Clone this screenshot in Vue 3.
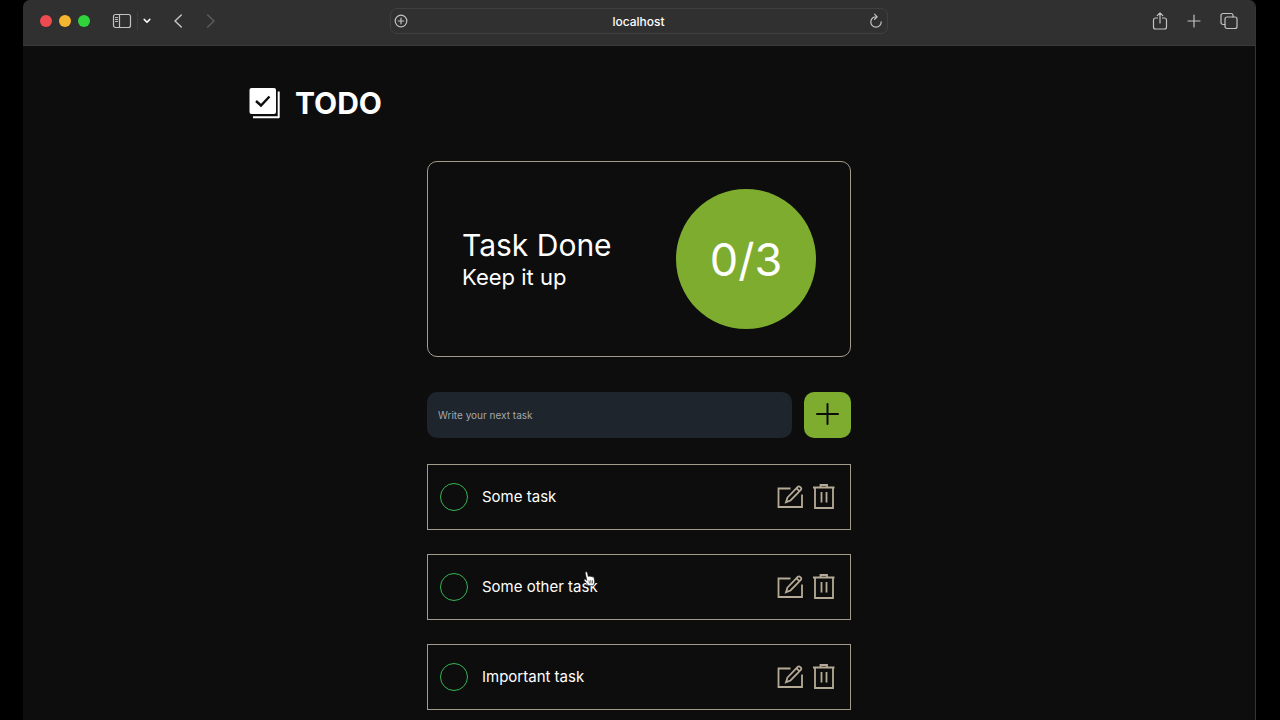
<template>
  <div class="desktop">
    <div class="window">
      <header class="toolbar">
        <div class="toolbar-left">
          <div class="lights">
            <button class="light red" aria-label="Close"></button>
            <button class="light yellow" aria-label="Minimize"></button>
            <button class="light green" aria-label="Zoom"></button>
          </div>
          <div class="sidebar-controls">
            <button class="icon-button" aria-label="Sidebar">
              <svg width="20" height="16" viewBox="0 0 20 16">
                <rect x="1.5" y="1.5" width="17" height="13" rx="2" />
                <path d="M7.5 1.5v13M3.5 4.5h2M3.5 6.5h2M3.5 8.5h2" />
              </svg>
            </button>
            <span class="separator"></span>
            <button class="icon-button bright" aria-label="Tab groups">
              <svg width="8" height="6" viewBox="0 0 8 6">
                <path d="M1.2 1.4 4 4.2l2.8-2.8" stroke-width="1.5" />
              </svg>
            </button>
          </div>
          <div class="history">
            <button class="icon-button" aria-label="Back">
              <svg width="10" height="16" viewBox="0 0 10 16">
                <path d="M8.3 2 2 8l6.3 6" stroke-width="1.5" />
              </svg>
            </button>
            <button class="icon-button dim" aria-label="Forward">
              <svg width="10" height="16" viewBox="0 0 10 16">
                <path d="M1.7 2 8 8l-6.3 6" stroke-width="1.5" />
              </svg>
            </button>
          </div>
        </div>

        <div class="address-bar">
          <button class="icon-button" aria-label="Page options">
            <svg width="14" height="14" viewBox="0 0 14 14">
              <circle cx="7" cy="7" r="5.8" />
              <path d="M7 4.2v5.6M4.2 7h5.6" />
            </svg>
          </button>
          <input class="address" v-model="address" aria-label="Address" />
          <button class="icon-button" aria-label="Reload">
            <svg width="14" height="16" viewBox="0 0 14 16">
              <path d="M7.5 3.8A5.2 5.2 0 1 0 12.2 8.8M5.6 1.2 8.2 3.8 5.6 6.3" />
            </svg>
          </button>
        </div>

        <div class="toolbar-right">
          <button class="icon-button" aria-label="Share">
            <svg width="16" height="20" viewBox="0 0 16 20">
              <path d="M5.5 7h-2a2 2 0 0 0-2 2v7a2 2 0 0 0 2 2h9a2 2 0 0 0 2-2V9a2 2 0 0 0-2-2h-2M8 12V2M5.2 4.7 8 1.9l2.8 2.8" />
            </svg>
          </button>
          <button class="icon-button" aria-label="New tab">
            <svg width="14" height="14" viewBox="0 0 14 14">
              <path d="M7 1v12M1 7h12" />
            </svg>
          </button>
          <button class="icon-button" aria-label="Tab overview">
            <svg width="18" height="18" viewBox="0 0 18 18">
              <rect x="5" y="5" width="12" height="11.5" rx="2" />
              <path d="M5 12.5H3a2 2 0 0 1-2-2v-7a2 2 0 0 1 2-2h8a2 2 0 0 1 2 2V5" />
            </svg>
          </button>
        </div>
      </header>

      <main class="page">
        <div class="brand">
          <svg width="32" height="32" viewBox="0 0 32 32">
            <rect x="0.500" y="1" width="26.500" height="26" rx="2" fill="#fff" />
            <path d="M29.700 4.500v25.800H4" fill="none" stroke="#fff" stroke-width="2" stroke-linejoin="round" />
            <path d="m7 14 5 4.500 8.500-9" fill="none" stroke="#0d0d0d" stroke-width="2.400" />
          </svg>
          <h1>TODO</h1>
        </div>

        <div class="content">
          <section class="summary">
            <div>
              <p class="summary-title">Task Done</p>
              <p class="summary-text">Keep it up</p>
            </div>
            <div class="counter">{{ doneCount }}/{{ tasks.length }}</div>
          </section>

          <form class="task-form" @submit.prevent="addTask">
            <input v-model="newTask" class="task-input" placeholder="Write your next task" aria-label="Next task" />
            <button class="add-button" aria-label="Add task">
              <svg width="24" height="24" viewBox="0 0 24 24">
                <path d="M11.500 1v20M1 11h21" />
              </svg>
            </button>
          </form>

          <ul class="tasks">
            <li v-for="task in tasks" :key="task.id" class="task">
              <label class="task-label">
                <input v-model="task.done" type="checkbox" class="task-check" />
                <span>{{ task.title }}</span>
              </label>
              <div class="actions">
                <button class="action" aria-label="Edit task" @click="editTask(task)">
                  <svg width="28" height="28" viewBox="0 0 28 28">
                    <path d="M14.500 5.500H2.500v18.500h23.500V11.500" />
                    <path d="M11.500 14.500 21.700 3.800a1.600 1.600 0 0 1 2.300 0l.8.800a1.600 1.600 0 0 1 0 2.300L14.500 17.500 10 19.200z" />
                    <path d="m20.500 5.300 3 2.800" />
                  </svg>
                </button>
                <button class="action" aria-label="Delete task" @click="removeTask(task)">
                  <svg width="28" height="28" viewBox="0 0 28 28">
                    <path d="M3 4.500h21.500M5 4.500V25h18V4.500M10.500 4V2h6.500v2M11.500 9v10.500M16.500 9v10.500" />
                  </svg>
                </button>
              </div>
            </li>
          </ul>
        </div>
      </main>
    </div>

    <svg class="pointer" width="13" height="16" viewBox="0 0 14 18">
      <path d="M2.500 1.200C3.500.400 4.500 1.300 4.800 2.400L5.600 6.200C6.200 5.300 7.200 5.500 7.500 6.300 8.300 5.600 9.400 5.900 9.800 6.800 10.800 6.200 12 6.900 12.200 8L12.800 11.500C13 13.300 12 14.700 11.700 16.500H5.500C5 14.500 2.400 13 .9 10.500.5 9.400 1.900 8.800 2.900 9.700L4 10.600 2.200 2.600Q2 1.700 2.500 1.200Z" fill="#fff" stroke="#111" stroke-width=".7" />
      <path d="M6.300 10.700 7 14M8.300 10.500 8.700 14M10.300 10.500v3.500" fill="none" stroke="#222" stroke-width=".8" />
    </svg>
  </div>
</template>

<script setup>
import { computed, ref } from 'vue'

const address = ref('localhost')
const newTask = ref('')
const tasks = ref([
  { id: 1, title: 'Some task', done: false },
  { id: 2, title: 'Some other task', done: false },
  { id: 3, title: 'Important task', done: false }
])

const doneCount = computed(() => tasks.value.filter((t) => t.done).length)

const addTask = () => {
  const title = newTask.value.trim()
  if (!title) return
  tasks.value.push({ id: Date.now(), title, done: false })
  newTask.value = ''
}

const removeTask = (task) => {
  tasks.value = tasks.value.filter((t) => t.id !== task.id)
}

// put the title back in the input so it can be changed
const editTask = (task) => {
  newTask.value = task.title
  removeTask(task)
}
</script>

<style>
body {
  margin: 0;
  background: #000000;
}
</style>

<style scoped>
.desktop {
  position: relative;
  min-height: 100vh;
  padding: 0 24px 0 23px;
  box-sizing: border-box;
  display: flex;
  font-family: Inter, 'Liberation Sans', sans-serif;
  color: #ffffff;
}

.window {
  flex: 1;
  background: #0d0d0d;
  border-right: 1px solid #353535;
  border-radius: 7px 7px 0 0;
  overflow: hidden;
}

button {
  border: none;
  padding: 0;
  background: none;
  cursor: pointer;
}

svg {
  display: block;
}

.toolbar {
  display: grid;
  grid-template-columns: 1fr minmax(200px, 498px) 1fr;
  align-items: center;
  height: 46px;
  padding: 0 17px 3px;
  box-sizing: border-box;
  background: #303030;
  border-bottom: 1px solid #3a3a3a;
}

.toolbar-left,
.toolbar-right,
.lights,
.sidebar-controls,
.history {
  display: flex;
  align-items: center;
}

.toolbar-left {
  gap: 22px;
}

.lights {
  gap: 7px;
}

.light {
  width: 12px;
  height: 12px;
  border-radius: 50%;
}

.red {
  background: #ee4b50;
}

.yellow {
  background: #f5b52e;
}

.green {
  background: #2fd43c;
}

.sidebar-controls {
  gap: 5px;
}

.separator {
  width: 1px;
  height: 18px;
  background: #3e3e3e;
}

.history {
  gap: 23px;
}

.icon-button svg {
  fill: none;
  stroke: #c2c2c2;
  stroke-width: 1.2;
  stroke-linecap: round;
  stroke-linejoin: round;
}

.icon-button.bright svg {
  stroke: #ffffff;
}

.icon-button.dim svg {
  stroke: #5c5c5c;
}

.address-bar {
  display: flex;
  align-items: center;
  height: 26px;
  padding: 0 4px 0 3px;
  box-sizing: border-box;
  border: 1px solid #404040;
  border-radius: 7px;
}

.address {
  flex: 1;
  min-width: 0;
  border: none;
  outline: none;
  background: none;
  color: #ffffff;
  font-family: inherit;
  font-size: 12px;
  font-weight: 500;
  text-align: center;
}

.toolbar-right {
  justify-content: flex-end;
  gap: 19px;
}

.page {
  padding: 40px 24px 10px;
}

.brand {
  display: flex;
  align-items: center;
  gap: 14px;
  max-width: 780px;
  margin: 0 auto;
}

.brand h1 {
  margin: 0;
  font-size: 30px;
  line-height: 34px;
  font-weight: 700;
}

.content {
  max-width: 424px;
  margin: 41px auto 0;
}

.summary {
  display: flex;
  align-items: center;
  justify-content: space-between;
  padding: 27px 34px;
  border: 1px solid #a49c8a;
  border-radius: 10px;
}

.summary p {
  margin: 0;
}

.summary-title {
  font-size: 30px;
  line-height: 36px;
}

.summary-text {
  font-size: 22px;
  line-height: 28px;
}

.counter {
  display: flex;
  align-items: center;
  justify-content: center;
  width: 140px;
  height: 140px;
  border-radius: 50%;
  background: #7dac2f;
  font-size: 45px;
}

.task-form {
  display: flex;
  gap: 12px;
  margin-top: 35px;
}

.task-input {
  flex: 1;
  min-width: 0;
  height: 46px;
  padding: 0 11px;
  box-sizing: border-box;
  border: none;
  border-radius: 10px;
  background: #1e252d;
  color: #ffffff;
  font-family: inherit;
  font-size: 10px;
}

.task-input::placeholder {
  color: #a3a7ab;
}

.add-button {
  display: flex;
  align-items: center;
  justify-content: center;
  width: 47px;
  height: 46px;
  border-radius: 10px;
  background: #7dac2f;
}

.add-button svg {
  fill: none;
  stroke: #0d0d0d;
  stroke-width: 2;
  stroke-linecap: round;
}

.tasks {
  display: flex;
  flex-direction: column;
  gap: 24px;
  margin: 26px 0 0;
  padding: 0;
  list-style: none;
}

.task {
  display: flex;
  align-items: center;
  justify-content: space-between;
  padding: 18px 12px;
  border: 1px solid #a49c8a;
}

.task-label {
  display: flex;
  align-items: center;
  gap: 14px;
  font-size: 15px;
  line-height: 20px;
  cursor: pointer;
}

.task-check {
  appearance: none;
  width: 28px;
  height: 28px;
  margin: 0;
  border: 1px solid #35b553;
  border-radius: 50%;
  cursor: pointer;
}

.task-check:checked {
  background: #35b553;
}

.actions {
  display: flex;
  gap: 6px;
}

.action svg {
  fill: none;
  stroke: #b5aa96;
  stroke-width: 1.8;
}

/* hand cursor above the second task */
.pointer {
  position: absolute;
  left: 583px;
  top: 571px;
}
</style>
